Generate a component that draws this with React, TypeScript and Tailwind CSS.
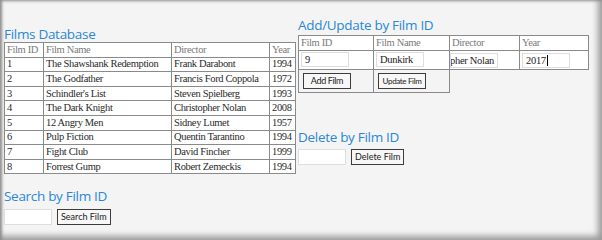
import React from "react";

type Film = { id: number; name: string; director: string; year: number };

const films: Film[] = [
  { id: 1, name: "The Shawshank Redemption", director: "Frank Darabont", year: 1994 },
  { id: 2, name: "The Godfather", director: "Francis Ford Coppola", year: 1972 },
  { id: 3, name: "Schindler's List", director: "Steven Spielberg", year: 1993 },
  { id: 4, name: "The Dark Knight", director: "Christopher Nolan", year: 2008 },
  { id: 5, name: "12 Angry Men", director: "Sidney Lumet", year: 1957 },
  { id: 6, name: "Pulp Fiction", director: "Quentin Tarantino", year: 1994 },
  { id: 7, name: "Fight Club", director: "David Fincher", year: 1999 },
  { id: 8, name: "Forrest Gump", director: "Robert Zemeckis", year: 1994 },
];

const heading =
  "font-['Open_Sans',sans-serif] text-[13.5px] leading-[16px] text-[#2b87d6] tracking-[-0.3px] whitespace-nowrap";
const cell =
  "border border-[#8a8a8a] px-[2px] py-0 h-[14.6px] leading-[12px] align-middle whitespace-nowrap overflow-hidden";
const btn =
  "h-[16px] px-[3px] bg-[#f7f7f7] border-[1.5px] border-[#3c3c3c] font-['Lato',sans-serif] leading-[12px] text-[#222] whitespace-nowrap";
const field =
  "h-[15px] w-[48px] bg-white border border-[#dedede] px-[3px] font-['Liberation_Serif',serif] text-[10.5px] tracking-[-0.3px] leading-[13px] text-[#222] outline-none";

const FilmsTable = () => (
  <table className="table-fixed w-[291px] border-collapse bg-white font-['Liberation_Serif',serif] text-[10.5px] tracking-[-0.35px] text-[#2a2a2a]">
    <colgroup>
      <col className="w-[39px]" />
      <col className="w-[128px]" />
      <col className="w-[98px]" />
      <col className="w-[26px]" />
    </colgroup>
    <thead>
      <tr className="text-[#7a7a7a]">
        <td className={cell}>Film ID</td>
        <td className={cell}>Film Name</td>
        <td className={cell}>Director</td>
        <td className={cell}>Year</td>
      </tr>
    </thead>
    <tbody>
      {films.map((f) => (
        <tr key={f.id}>
          <td className={cell}>{f.id}</td>
          <td className={cell}>{f.name}</td>
          <td className={cell}>{f.director}</td>
          <td className={cell}>{f.year}</td>
        </tr>
      ))}
    </tbody>
  </table>
);

const edge = "border border-[#8a8a8a] whitespace-nowrap";

const EditTable = () => (
  <table className="table-fixed w-[290px] border-collapse font-['Liberation_Serif',serif] text-[10.5px] tracking-[-0.35px] text-[#7a7a7a]">
    <colgroup>
      <col className="w-[75px]" />
      <col className="w-[76px]" />
      <col className="w-[70px]" />
      <col className="w-[69px]" />
    </colgroup>
    <tbody>
      <tr className="bg-white">
        <td className={`${edge} px-[2px] h-[15px] leading-[12px]`}>Film ID</td>
        <td className={`${edge} px-[2px] h-[15px] leading-[12px]`}>Film Name</td>
        <td className={`${edge} px-[2px] h-[15px] leading-[12px]`}>Director</td>
        <td className={`${edge} px-[2px] h-[15px] leading-[12px]`}>Year</td>
      </tr>
      <tr className="bg-white">
        <td className={`${edge} px-[2px] h-[19px]`}>
          <input className={field} defaultValue="9" />
        </td>
        <td className={`${edge} px-[2px] h-[19px]`}>
          <input className={field} defaultValue="Dunkirk" />
        </td>
        <td className={`${edge} px-0 h-[19px]`}>
          <div className={`${field} overflow-hidden flex justify-end`}>
            <span className="shrink-0">Christopher Nolan</span>
          </div>
        </td>
        <td className={`${edge} px-[2px] h-[19px]`}>
          <div className={`${field} border-[#4a90d9] flex items-center`}>
            <span>2017</span>
            <span className="ml-[1px] h-[11px] w-[1px] bg-black" />
          </div>
        </td>
      </tr>
      <tr>
        <td className={`${edge} px-[4px] h-[23px]`}>
          <button className={`${btn} text-[9px] w-[48px]`}>Add Film</button>
        </td>
        <td className={`${edge} px-[4px] h-[23px]`}>
          <button className={`${btn} text-[8px] w-[48px] px-0`}>Update Film</button>
        </td>
      </tr>
    </tbody>
  </table>
);

export default function App() {
  return (
    <div className="relative w-[602px] h-[240px] overflow-hidden bg-[#f4f4f4] shadow-[inset_3px_2px_3px_-1px_#8c8c8c,inset_-6px_-6px_6px_-2px_#9a9a9a]">
      <div className="flex items-start pl-[4px]">
        <div className="flex flex-col w-[291px] pt-[26px]">
          <h2 className={heading}>Films Database</h2>
          <FilmsTable />
          <h2 className={`${heading} mt-[14px]`}>Search by Film ID</h2>
          <div className="flex items-center gap-[5px] mt-[5px]">
            <input className={`${field} h-[16px]`} />
            <button className={`${btn} text-[9px]`}>Search Film</button>
          </div>
        </div>
        <div className="flex flex-col ml-[3px] pt-[17px]">
          <h2 className={heading}>Add/Update by Film ID</h2>
          <div className="mt-[2px]">
            <EditTable />
          </div>
          <h2 className={`${heading} mt-[36px]`}>Delete by Film ID</h2>
          <div className="flex items-center gap-[5px] mt-[4px]">
            <input className={`${field} h-[16px]`} />
            <button className={`${btn} text-[9px]`}>Delete Film</button>
          </div>
        </div>
      </div>
    </div>
  );
}
